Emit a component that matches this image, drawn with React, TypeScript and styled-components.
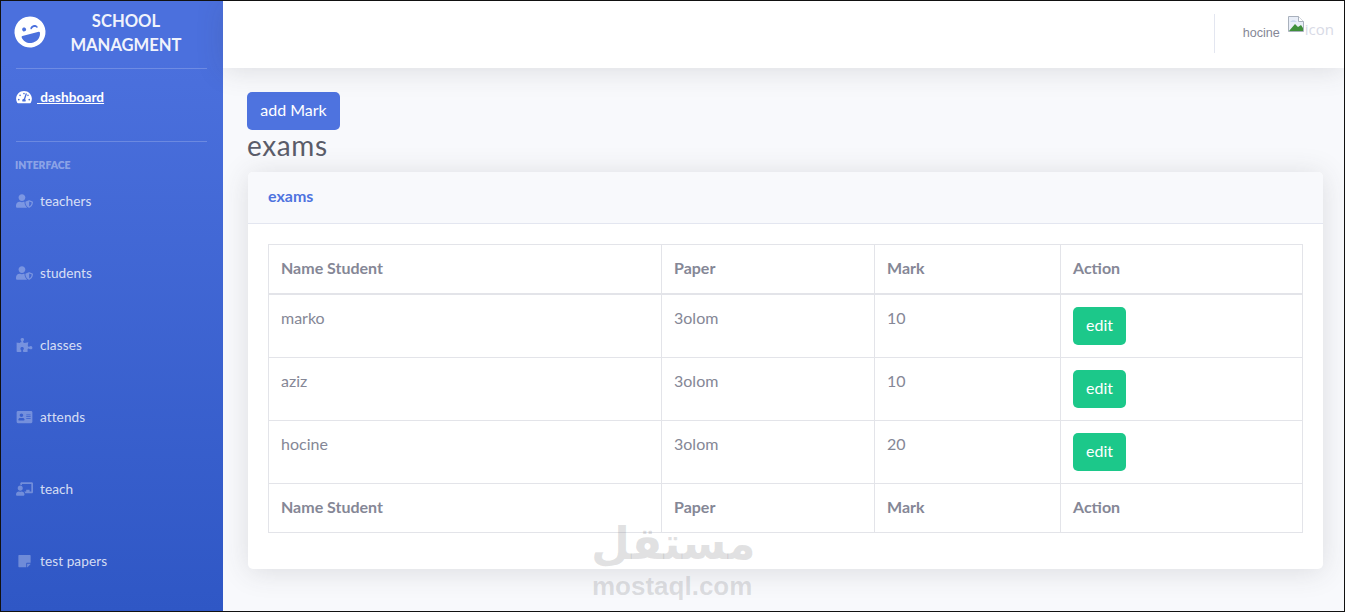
import React from "react";
import styled, { createGlobalStyle } from "styled-components";
import {
  FaLaughWink,
  FaTachometerAlt,
  FaUserShield,
  FaPuzzlePiece,
  FaAddressCard,
  FaChalkboardTeacher,
  FaStickyNote,
} from "react-icons/fa";

const Global = createGlobalStyle`
  html, body { margin: 0; padding: 0; height: 100%; overflow: hidden; }
  body { font-family: Lato, "Noto Sans", sans-serif; color: #858796; background: #000; }
`;

const Frame = styled.div`
  position: relative;
  width: 1345px;
  height: 612px;
  box-sizing: border-box;
  border: 1px solid #111;
  display: flex;
  overflow: hidden;
  background: #f8f9fc;
`;

const Sidebar = styled.aside`
  flex: 0 0 222px;
  height: 610px;
  overflow: hidden;
  background: linear-gradient(180deg, #4b70dd 10%, #2f57c5 100%);
  display: flex;
  flex-direction: column;
  color: #fff;
`;

const Brand = styled.div`
  height: 67px;
  flex: none;
  display: flex;
  align-items: flex-start;
  padding: 15px 0 0 13px;
  box-sizing: border-box;
`;

const BrandLogo = styled(FaLaughWink)`
  width: 32px;
  height: 32px;
  flex: none;
  transform: rotate(-15deg);
  color: #fff;
`;

const BrandTitle = styled.div`
  width: 160px;
  margin-top: -7px;
  text-align: center;
  font-size: 16.6px;
  font-weight: 700;
  line-height: 24px;
  color: #fff;
  opacity: 0.92;
`;

const Divider = styled.hr`
  flex: none;
  margin: 0 16px 0 15px;
  height: 1px;
  border: 0;
  background: rgba(255, 255, 255, 0.2);
`;

const ActiveItem = styled.a`
  height: 72px;
  flex: none;
  display: flex;
  align-items: flex-start;
  padding: 18px 0 0 15px;
  box-sizing: border-box;
  color: #fff;
  font-size: 13.6px;
  font-weight: 700;
  letter-spacing: 0.05px;
  line-height: 20px;
  svg { width: 16px; height: 14px; margin: 3px 5px 0 0; flex: none; }
  span { text-decoration: underline; white-space: pre; }
`;

const Heading = styled.div`
  flex: none;
  margin: 16px 0 0 14px;
  height: 14px;
  line-height: 14px;
  font-size: 10.4px;
  font-weight: 800;
  color: rgba(255, 255, 255, 0.4);
`;

const Nav = styled.nav`
  display: flex;
  flex-direction: column;
  margin-top: 19px;
`;

const NavItem = styled.a`
  height: 72px;
  flex: none;
  display: flex;
  align-items: flex-start;
  padding: 0 0 0 15px;
  box-sizing: border-box;
  color: rgba(255, 255, 255, 0.8);
  font-size: 13.6px;
  letter-spacing: 0.08px;
  line-height: 20px;
  svg { width: 17px; height: 14px; margin: 3px 7px 0 0; flex: none; color: rgba(255, 255, 255, 0.3); }
`;

const Main = styled.div`
  flex: 1;
  min-width: 0;
  display: flex;
  flex-direction: column;
`;

const Topbar = styled.header`
  position: relative;
  flex: none;
  height: 67px;
  background: #fff;
  box-shadow: 0 2.4px 28px rgba(58, 59, 69, 0.15);
  display: flex;
  align-items: flex-start;
  justify-content: flex-end;
  padding-right: 10px;
  box-sizing: border-box;
`;

const TopDivider = styled.div`
  width: 1px;
  height: 39px;
  margin-top: 13px;
  background: #e3e6f0;
`;

const UserName = styled.span`
  margin: 24px 0 0 28px;
  font-size: 12.6px;
  line-height: 17px;
  color: #858796;
  font-family: "Liberation Sans", sans-serif;
`;

const BrokenImage = styled.span`
  display: flex;
  align-items: flex-start;
  margin: 15px 0 0 8px;
  font-size: 15px;
  line-height: 26px;
  color: #d8dae6;
  font-family: "Open Sans", sans-serif;
  svg { width: 16px; height: 16px; flex: none; margin-right: 1px; }
`;

const Content = styled.main`
  padding: 24px 21px 0 24px;
`;

const AddButton = styled.button`
  display: block;
  width: 93px;
  height: 38px;
  padding: 0 0 3px;
  border: 0;
  border-radius: 5px;
  background: #4e73df;
  color: #fff;
  font-family: inherit;
  font-size: 16px;
`;

const Title = styled.h3`
  margin: 0 0 12px;
  height: 30px;
  line-height: 30px;
  font-size: 28px;
  letter-spacing: 0.6px;
  font-weight: 400;
  color: #5a5c69;
`;

const Card = styled.section`
  margin-left: 1px;
  height: 397px;
  background: #fff;
  border-radius: 5px;
  box-shadow: 0 2.4px 28px rgba(58, 59, 69, 0.15);
  overflow: hidden;
`;

const CardHeader = styled.div`
  height: 51px;
  padding-left: 20px;
  background: #f8f9fc;
  border-bottom: 1px solid #e3e6f0;
  line-height: 47px;
  font-size: 16px;
  font-weight: 700;
  color: #4e73df;
`;

const CardBody = styled.div`
  padding: 20px;
`;

const Table = styled.table`
  width: 1035px;
  table-layout: fixed;
  border-collapse: collapse;
  font-size: 16px;
  color: #858796;
`;

const HeadCell = styled.th<{ $w?: number }>`
  width: ${(p) => (p.$w ? `${p.$w}px` : "auto")};
  height: 49px;
  padding: 0 12px 2px;
  box-sizing: border-box;
  text-align: left;
  font-weight: 700;
  border: 1px solid #e3e4e9;
`;

const HeadRow = styled.tr<{ $thick?: boolean }>`
  th { border-bottom-width: ${(p) => (p.$thick ? 2 : 1)}px; }
`;

const Cell = styled.td`
  height: 63px;
  padding: 12px;
  box-sizing: border-box;
  vertical-align: top;
  line-height: 22px;
  border: 1px solid #e3e4e9;
`;

const EditButton = styled.button`
  display: block;
  width: 53px;
  height: 38px;
  padding: 0 0 2px;
  border: 0;
  border-radius: 5px;
  background: #1cc88a;
  color: #fff;
  font-family: inherit;
  font-size: 16px;
`;

const Watermark = styled.div`
  position: absolute;
  left: 590px;
  top: 518px;
  width: 160px;
  text-align: center;
  color: rgba(120, 120, 125, 0.22);
  pointer-events: none;
`;

const WatermarkArabic = styled.div`
  font-family: "DejaVu Sans", sans-serif;
  font-weight: 700;
  font-size: 45px;
  line-height: 50px;
  white-space: nowrap;
`;

const WatermarkLatin = styled.div`
  margin-top: 4px;
  margin-left: 1px;
  font-family: "Liberation Sans", sans-serif;
  font-weight: 700;
  font-size: 26px;
  line-height: 26px;
  white-space: nowrap;
`;

const rows = [
  { name: "marko", paper: "3olom", mark: "10" },
  { name: "aziz", paper: "3olom", mark: "10" },
  { name: "hocine", paper: "3olom", mark: "20" },
];

const nav = [
  { label: "teachers", Icon: FaUserShield },
  { label: "students", Icon: FaUserShield },
  { label: "classes", Icon: FaPuzzlePiece },
  { label: "attends", Icon: FaAddressCard },
  { label: "teach", Icon: FaChalkboardTeacher },
  { label: "test papers", Icon: FaStickyNote },
];

const BrokenIcon = () => (
  <svg viewBox="0 0 16 16">
    <path d="M0.5 0.5h10l5 5v10H0.5z" fill="#e9eef8" stroke="#a9b1bd" strokeWidth="1" />
    <path d="M10.5 0.5v5h5" fill="#fff" stroke="#a9b1bd" strokeWidth="1" />
    <path d="M1 15l6-7 3 3 3-2 2 3v3z" fill="#3f8f3a" />
    <path d="M2 6c2-2.4 5-2.4 7 0z" fill="#c9d6ee" />
  </svg>
);

const Heads = ({ thick }: { thick?: boolean }) => (
  <HeadRow $thick={thick}>
    <HeadCell $w={393}>Name Student</HeadCell>
    <HeadCell $w={213}>Paper</HeadCell>
    <HeadCell $w={186}>Mark</HeadCell>
    <HeadCell>Action</HeadCell>
  </HeadRow>
);

export default function App() {
  return (
    <>
      <Global />
      <Frame>
        <Sidebar>
          <Brand>
            <BrandLogo />
            <BrandTitle>
              SCHOOL
              <br />
              MANAGMENT
            </BrandTitle>
          </Brand>
          <Divider />
          <ActiveItem>
            <FaTachometerAlt />
            <span> dashboard</span>
          </ActiveItem>
          <Divider />
          <Heading>INTERFACE</Heading>
          <Nav>
            {nav.map(({ label, Icon }) => (
              <NavItem key={label}>
                <Icon />
                {label}
              </NavItem>
            ))}
          </Nav>
        </Sidebar>
        <Main>
          <Topbar>
            <TopDivider />
            <UserName>hocine</UserName>
            <BrokenImage>
              <BrokenIcon />
              icon
            </BrokenImage>
          </Topbar>
          <Content>
            <AddButton>add Mark</AddButton>
            <Title>exams</Title>
            <Card>
              <CardHeader>exams</CardHeader>
              <CardBody>
                <Table>
                  <thead>
                    <Heads thick />
                  </thead>
                  <tbody>
                    {rows.map((r) => (
                      <tr key={r.name}>
                        <Cell>{r.name}</Cell>
                        <Cell>{r.paper}</Cell>
                        <Cell>{r.mark}</Cell>
                        <Cell>
                          <EditButton>edit</EditButton>
                        </Cell>
                      </tr>
                    ))}
                  </tbody>
                  <tfoot>
                    <Heads />
                  </tfoot>
                </Table>
              </CardBody>
            </Card>
          </Content>
        </Main>
        <Watermark>
          <WatermarkArabic>مستقل</WatermarkArabic>
          <WatermarkLatin>mostaql.com</WatermarkLatin>
        </Watermark>
      </Frame>
    </>
  );
}
